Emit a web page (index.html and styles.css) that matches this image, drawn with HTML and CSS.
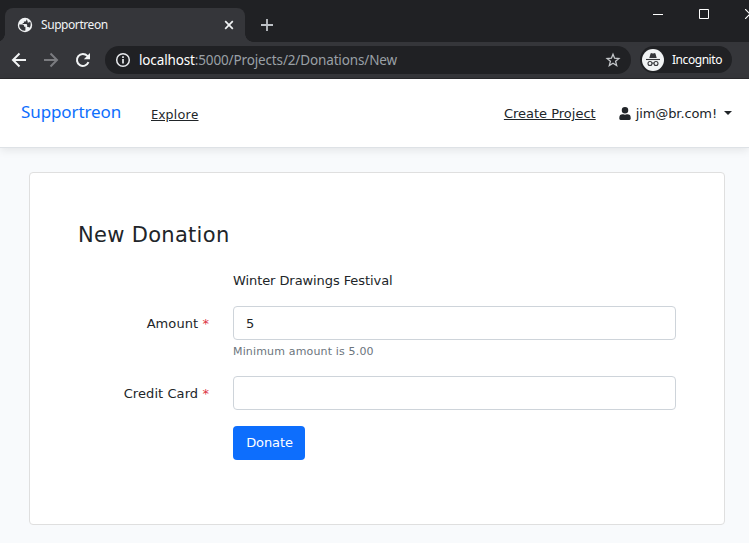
FILE: index.html
```html
<!DOCTYPE html>
<html lang="en">
<head>
<meta charset="utf-8">
<title>Supportreon</title>
<link rel="stylesheet" href="styles.css">
</head>
<body>
<header class="titlebar">
  <div class="tab">
    <svg class="globe" width="16" height="16" viewBox="0 0 16 16"><circle cx="8" cy="8" r="7.200" fill="#f1f3f4"/><path d="M2.200 7.400H5.500q1.600 0 1.600 1.600v.8h1.300v3.800q-3.400.4-5.200-2.200Q2 9.500 2.200 7.400zM9.300 2.200v1.200q0 1.100-1.200 1.100H6.900v1.400H5.700v1.200H9q1.200 0 1.200 1.200v1.600h1q1 0 1.300.8 1.400-1.800 1.200-4-.1-1.100-.7-2.100l-.9.9h-1.500V4z" fill="#35363a"/></svg>
    <span class="tab-title">Supportreon</span>
    <svg class="tab-close" width="10" height="10" viewBox="0 0 10 10"><path d="M1.200 1.200l7.600 7.600M8.800 1.200L1.200 8.800" stroke="#f1f3f4" stroke-width="1.700"/></svg>
  </div>
  <svg class="plus" width="14" height="14" viewBox="0 0 14 14"><path d="M7 1v12M1 7h12" stroke="#bdc1c6" stroke-width="1.800"/></svg>
  <div class="window-controls">
    <svg width="10" height="10" viewBox="0 0 10 10"><path d="M0 5.500h10" stroke="#fff"/></svg>
    <svg width="10" height="10" viewBox="0 0 10 10"><path d="M.5.5h9v9h-9z" fill="none" stroke="#fff"/></svg>
    <svg width="10" height="10" viewBox="0 0 10 10"><path d="M0 0l10 10M10 0L0 10" stroke="#fff" stroke-width="1.200"/></svg>
  </div>
</header>
<div class="toolbar">
  <div class="nav-buttons">
    <svg width="16" height="16" viewBox="0 0 16 16"><path d="M15 8H2M8.500 1.500L2 8l6.500 6.500" fill="none" stroke="#f1f3f4" stroke-width="2"/></svg>
    <svg width="16" height="16" viewBox="0 0 16 16"><path d="M1 8h13M7.500 1.500L14 8l-6.500 6.500" fill="none" stroke="#7b7c80" stroke-width="2"/></svg>
    <svg width="16" height="16" viewBox="0 0 16 16"><path d="M13.500 10.200A6 6 0 1 1 12.400 3.900l1 1" fill="none" stroke="#f1f3f4" stroke-width="2"/><path d="M15 1v6.200H8.800z" fill="#f1f3f4"/></svg>
  </div>
  <div class="address">
    <svg class="info" width="16" height="16" viewBox="0 0 16 16"><circle cx="8" cy="8" r="6.300" fill="none" stroke="#e8eaed" stroke-width="1.500"/><path d="M8 7v4.500M8 4.300V6" stroke="#e8eaed" stroke-width="1.700"/></svg>
    <span class="url"><span class="host">localhost</span>:5000/Projects/2/Donations/New</span>
    <svg class="star" width="16" height="16" viewBox="0 0 16 16"><path d="M8 2.200l1.600 4 4.300.3-3.300 2.800 1.100 4.200L8 11.200l-3.700 2.300 1.100-4.200-3.300-2.800 4.300-.3z" fill="none" stroke="#c4c7ca" stroke-width="1.300"/></svg>
  </div>
  <div class="incognito">
    <svg width="22" height="22" viewBox="0 0 22 22"><circle cx="11" cy="11" r="11" fill="#f1f3f4"/><path d="M7.300 9l1.200-4.300q.3-.8 1.200-.5l1.300.4 1.300-.4q.9-.3 1.200.5L14.700 9z" fill="#35363a"/><path d="M4 10.500h14" stroke="#35363a" stroke-width="1.100"/><g fill="none" stroke="#35363a" stroke-width="1.100"><circle cx="8" cy="14.500" r="2"/><circle cx="14" cy="14.500" r="2"/><path d="M10 14.300q1-.6 2 0"/></g></svg>
    <span>Incognito</span>
  </div>
</div>
<nav class="navbar">
  <a class="brand">Supportreon</a>
  <a class="link explore">Explore</a>
  <a class="link create">Create Project</a>
  <div class="user">
    <svg width="12" height="13" viewBox="0 0 448 512"><path fill="#212529" d="M224 256A128 128 0 1 0 224 0a128 128 0 0 0 0 256zm90 32h-17a174 174 0 0 1-146 0h-17A134 134 0 0 0 0 422v42c0 27 21 48 48 48h352c27 0 48-21 48-48v-42a134 134 0 0 0-134-134z"/></svg>
    <span class="user-name">jim@br.com!</span>
    <i class="caret"></i>
  </div>
</nav>
<main class="card">
  <h1>New Donation</h1>
  <form class="form">
    <div class="project">Winter Drawings Festival</div>
    <label for="amount">Amount <b>*</b></label>
    <div class="field">
      <input id="amount" type="text" value="5">
      <small>Minimum amount is 5.00</small>
    </div>
    <label for="card">Credit Card <b>*</b></label>
    <div class="field"><input id="card" type="text"></div>
    <button type="button">Donate</button>
  </form>
</main>
</body>
</html>
```
FILE: styles.css
```css
* { box-sizing: border-box; }
body {
  margin: 0;
  height: 543px;
  overflow: hidden;
  background: #f8fafc;
  color: #212529;
  font: 13px/20px Verdana, "DejaVu Sans", sans-serif;
}
svg { display: block; flex: none; }
.titlebar {
  display: flex;
  height: 42px;
  padding-left: 5px;
  background: #202124;
  overflow: hidden;
}
.tab {
  position: relative;
  display: flex;
  align-items: center;
  width: 240px;
  height: 34px;
  margin-top: 8px;
  padding: 0 11px 0 12px;
  border-radius: 8px 8px 0 0;
  background: #35363a;
  color: #f1f3f4;
  font: 12px/16px "Noto Sans", sans-serif;
}
.tab::before,
.tab::after {
  content: "";
  position: absolute;
  bottom: 0;
  width: 8px;
  height: 8px;
}
.tab::before { left: -8px; background: radial-gradient(circle at 0 0, transparent 7.5px, #35363a 8px); }
.tab::after { right: -8px; background: radial-gradient(circle at 100% 0, transparent 7.5px, #35363a 8px); }
.tab-title { margin-left: 8px; letter-spacing: -0.43px; }
.tab-close { margin-left: auto; }
.plus { margin: 18px 0 0 15px; }
.window-controls {
  display: flex;
  gap: 36px;
  margin: 9px -6px 0 auto;
}
.toolbar {
  display: flex;
  align-items: center;
  height: 37px;
  padding: 0 17px 1px 11px;
  border-bottom: 1px solid #29292c;
  background: #35363a;
  font-family: "Noto Sans", sans-serif;
}
.nav-buttons { display: flex; gap: 16px; width: 94px; }
.address {
  display: flex;
  align-items: center;
  width: 526px;
  height: 28px;
  padding: 0 10px;
  border-radius: 14px;
  background: #202124;
}
.url { margin-left: 8px; color: #9aa0a6; font-size: 13.5px; letter-spacing: -0.14px; }
.host { color: #fff; }
.star { margin-left: auto; }
.incognito {
  display: flex;
  align-items: center;
  width: 92px;
  height: 27px;
  margin-left: 9px;
  padding-left: 2px;
  border-radius: 14px;
  background: #202124;
  color: #fff;
  font-size: 12px;
}
.incognito span { margin-left: 8px; letter-spacing: -0.45px; }
.navbar {
  display: flex;
  align-items: center;
  height: 69px;
  padding: 0 17px 0 21px;
  border-bottom: 1px solid #dee2e6;
  background: #fff;
  box-shadow: 0 2px 9px rgba(0, 0, 0, .09);
}
.brand {
  width: 130px;
  margin-bottom: 2px;
  color: #0d6efd;
  font: 17px/24px "Noto Sans", sans-serif;
  letter-spacing: -0.1px;
}
.link { margin-top: 2px; text-decoration: underline; text-underline-offset: 1px; }
.explore { font-family: "Noto Sans", sans-serif; letter-spacing: 0.25px; }
.create { margin-left: auto; }
.user { display: flex; align-items: center; margin-left: 23px; }
.user-name { margin: 2px 0 0 5px; letter-spacing: -0.1px; }
.caret {
  margin-left: 7px;
  border: 4px solid transparent;
  border-top-color: #212529;
  border-bottom: 0;
}
.card {
  width: 696px;
  height: 353px;
  margin: 24px 0 0 29px;
  padding: 49px 48px;
  border: 1px solid #dfdfdf;
  border-radius: 4px;
  background: #fff;
}
h1 { margin: 0; font-size: 21px; font-weight: 400; line-height: 26px; letter-spacing: 0.3px; }
.form {
  display: grid;
  grid-template-columns: 131px 443px;
  column-gap: 24px;
  align-items: start;
  margin-top: 23px;
}
.project { grid-column: 2; margin-bottom: 15px; letter-spacing: -0.08px; }
label { padding-top: 8px; text-align: right; letter-spacing: 0.08px; }
label b { color: #dc3545; font-weight: 400; }
.field { margin-bottom: 16px; }
input {
  display: block;
  width: 443px;
  height: 34px;
  padding: 0 12px;
  border: 1px solid #ced4da;
  border-radius: 4px;
  color: #212529;
  font: inherit;
}
small { display: block; margin-top: 3px; color: #6c757d; font-size: 11px; line-height: 17px; letter-spacing: 0.16px; }
button {
  grid-column: 2;
  width: 72px;
  height: 34px;
  padding: 0 0 0 1px;
  border: 0;
  border-radius: 4px;
  background: #0d6efd;
  color: #fff;
  font: inherit;
  letter-spacing: -0.1px;
}
```
